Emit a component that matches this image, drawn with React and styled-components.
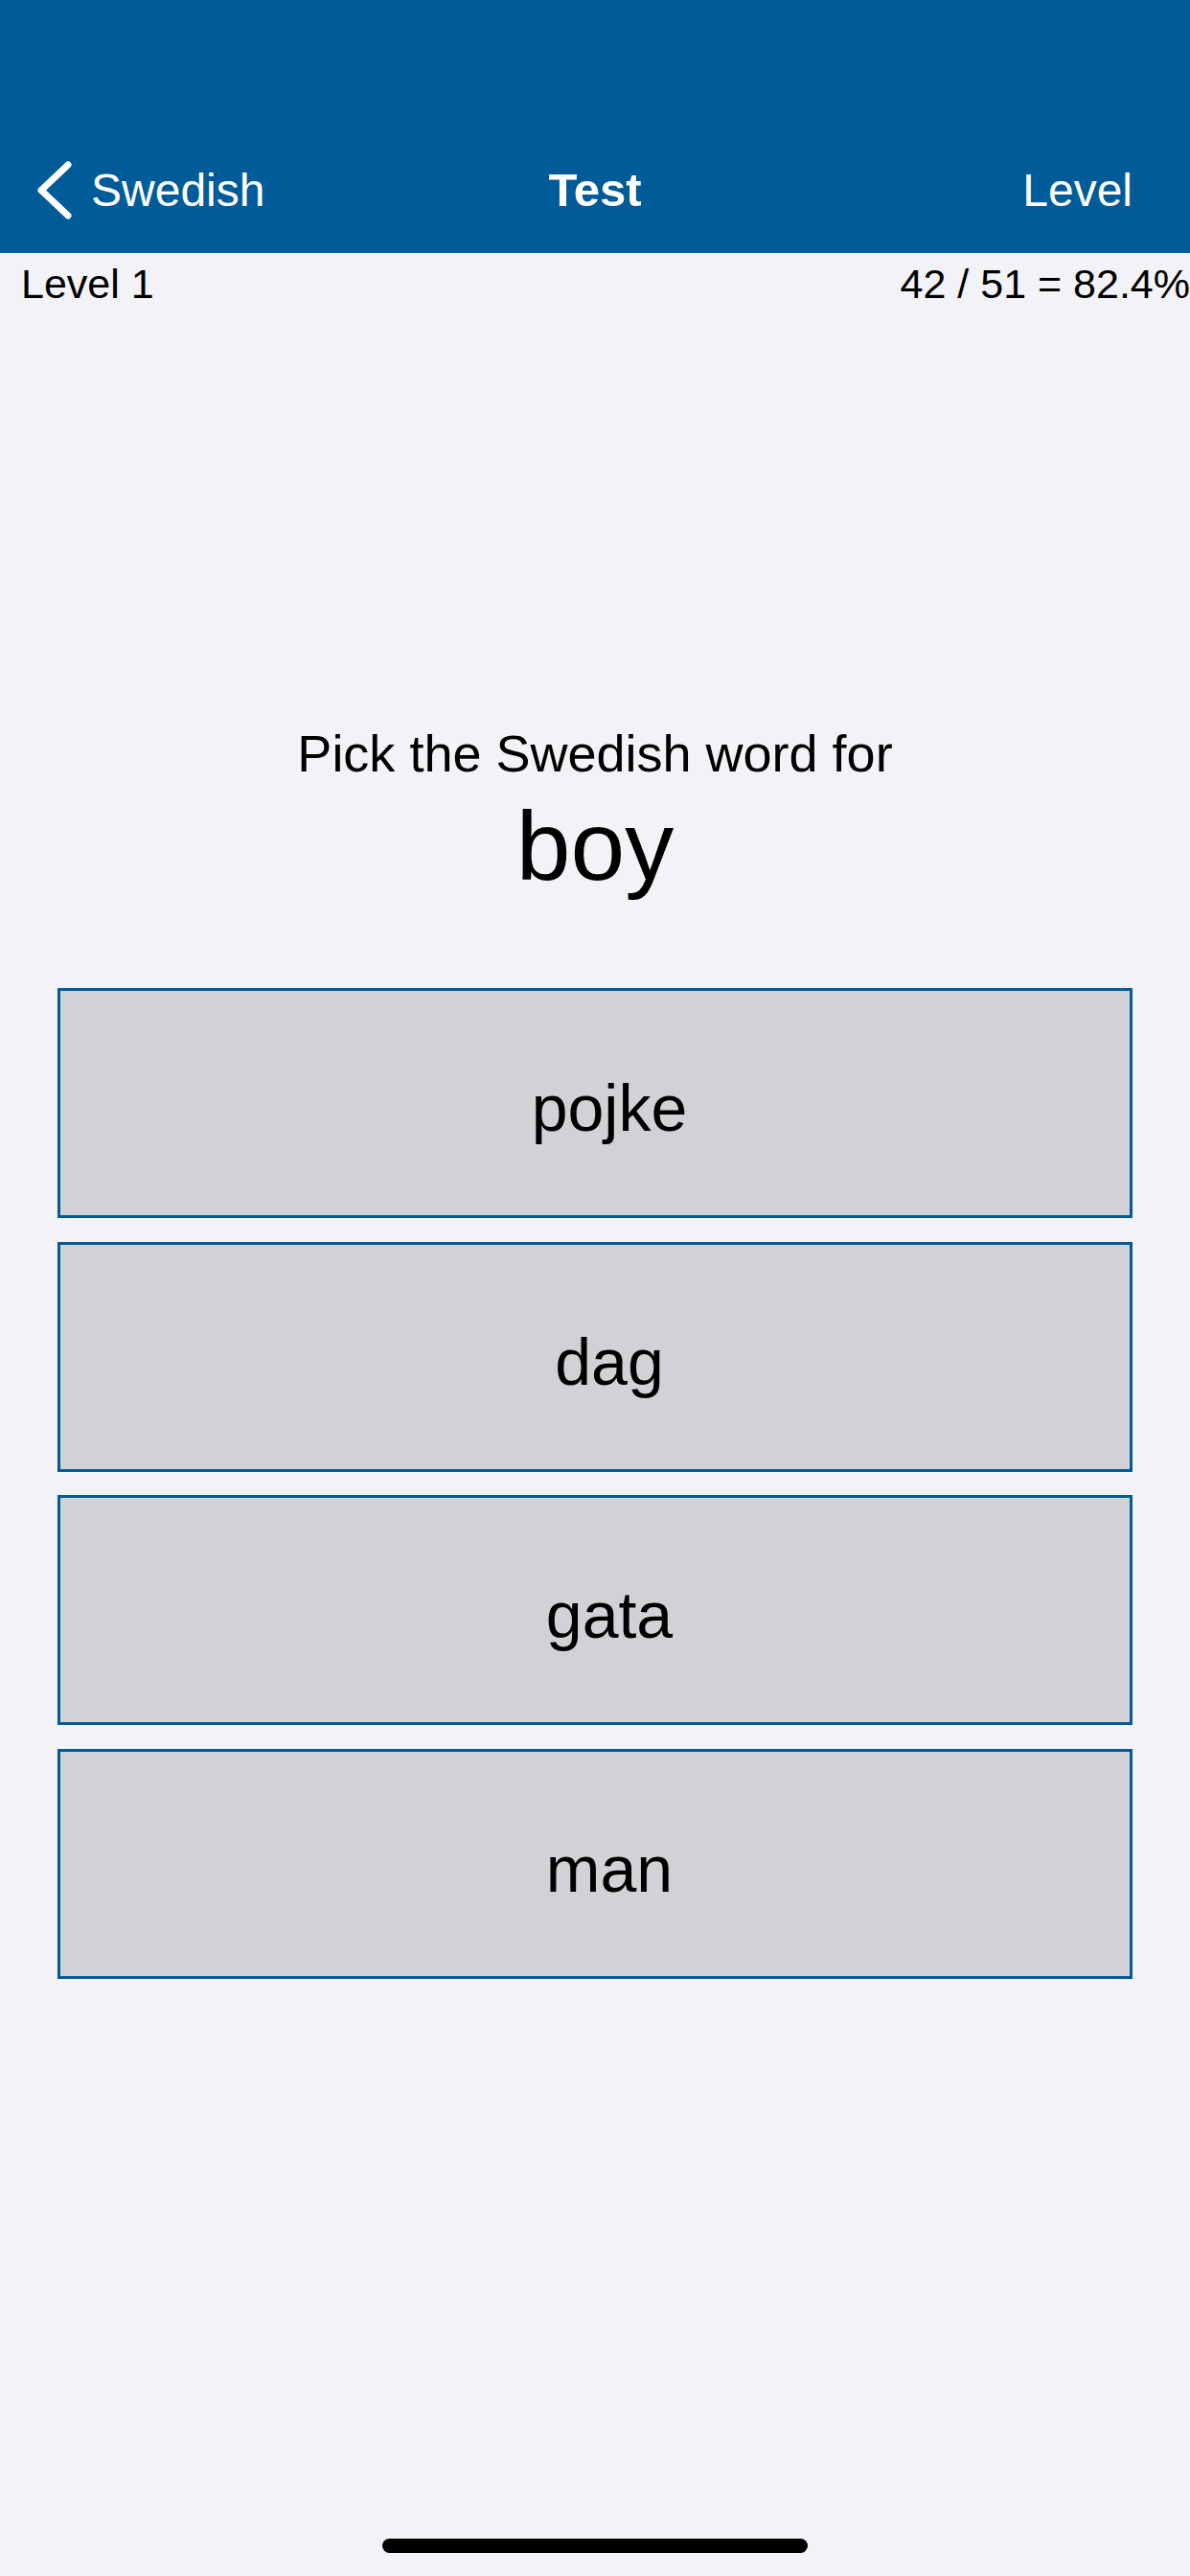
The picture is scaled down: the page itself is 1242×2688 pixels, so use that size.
import React from 'react'
import styled, { createGlobalStyle } from 'styled-components';

const BLUE = '#005b99';

const GlobalStyle = createGlobalStyle`
  html, body {
    margin: 0;
    padding: 0;
    background: #f2f2f7;
  }
  body {
    font-family: "Liberation Sans", Arial, sans-serif;
    color: #000;
  }
`

const options = ['pojke', 'dag', 'gata', 'man'];

const BackIcon = () => (
  <svg width="44" height="68" viewBox="0 0 44 68">
    <path d="M37 7 L9 33.5 L37 60" fill="none" stroke="#fff" strokeWidth="7" strokeLinecap="round" strokeLinejoin="round" />
  </svg>
)

const App = () => {
  return (
    <>
      <GlobalStyle />
      <Screen>
        <Header>
          <NavBar>
            <BackButton>
              <BackIcon />
              <span>Swedish</span>
            </BackButton>
            <Title>Test</Title>
            <NavAction>Level</NavAction>
          </NavBar>
        </Header>

        <InfoRow>
          <span>Level 1</span>
          <span>42 / 51 = 82.4%</span>
        </InfoRow>

        <Prompt>Pick the Swedish word for</Prompt>
        <Word>boy</Word>

        <Choices>
          {options.map((o) => (
            <Choice key={o}>{o}</Choice>
          ))}
        </Choices>

        <HomeIndicator />
      </Screen>
    </>
  )
}

export default App;

const Screen = styled.div`
  min-height: 2688px;
  display: flex;
  flex-direction: column;
  background: #f2f2f7;
  overflow: hidden;
`

const Header = styled.header`
  background: ${BLUE};
  height: 264px;
  padding-top: 132px;
  box-sizing: border-box;
`

const NavBar = styled.nav`
  height: 132px;
  display: grid;
  grid-template-columns: 1fr auto 1fr;
  align-items: center;
  color: #fff;
  font-size: 48px;
`

const BackButton = styled.div`
  display: flex;
  align-items: center;
  gap: 17px;
  padding-left: 34px;
  margin-top: 1px;

  svg {
    display: block;
  }
`

const Title = styled.div`
  font-weight: bold;
  font-size: 49px;
`

const NavAction = styled.div`
  justify-self: end;
  padding-right: 60px;
`

const InfoRow = styled.div`
  display: flex;
  justify-content: space-between;
  align-items: center;
  margin-top: 7px;
  padding-left: 22px;
  font-size: 43px;
  line-height: 50px;
  white-space: nowrap;
`

const Prompt = styled.div`
  margin-top: 434px;
  text-align: center;
  font-size: 54px;
  line-height: 62px;
`

const Word = styled.div`
  margin-top: 9px;
  text-align: center;
  font-size: 102px;
  line-height: 114px;
`

const Choices = styled.div`
  margin: 91px 60px 0;
  display: flex;
  flex-direction: column;
  gap: 24.5px;
`

const Choice = styled.button`
  height: 240px;
  box-sizing: border-box;
  border: 3px solid ${BLUE};
  background: #d1d1d6;
  display: flex;
  align-items: center;
  justify-content: center;
  padding: 10px 0 0 30px;
  font-family: "Liberation Sans", Arial, sans-serif;
  font-size: 68px;
  color: #000;
`

const HomeIndicator = styled.div`
  margin: auto auto 24px;
  width: 444px;
  height: 15px;
  border-radius: 8px;
  background: #000;
`
